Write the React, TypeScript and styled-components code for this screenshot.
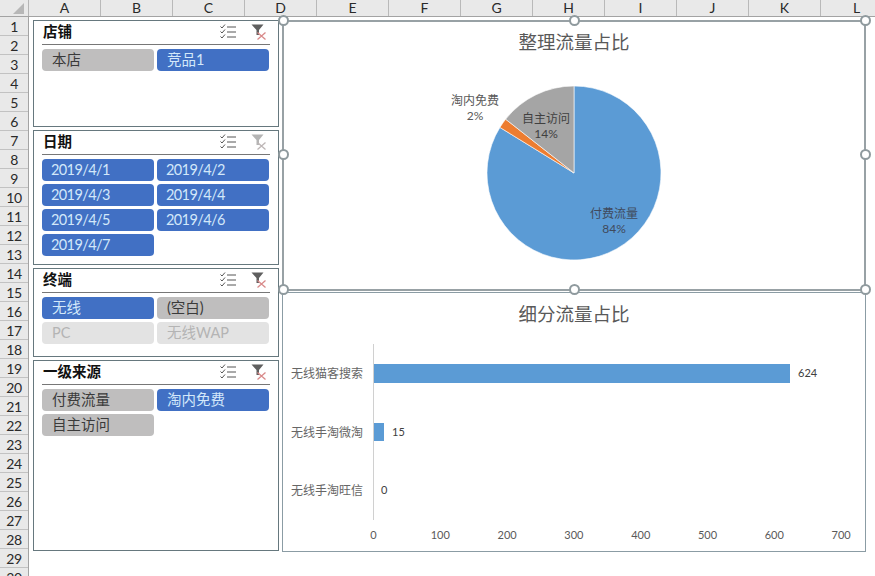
import React from "react";
import styled, { createGlobalStyle } from "styled-components";

const FONT = `Lato, "Noto Sans CJK SC", sans-serif`;

const GlobalStyle = createGlobalStyle`
  html, body { margin: 0; padding: 0; background: #fff; }
  body { font-family: ${FONT}; }
`;

const Sheet = styled.div`
  width: 875px;
  height: 576px;
  overflow: hidden;
  background: #fff;
  display: flex;
  flex-direction: column;
`;
const ColumnBar = styled.div`
  display: flex;
  flex: none;
  height: 17px;
  box-sizing: border-box;
  background: #e9e9e9;
  border-bottom: 1px solid #a3a3a3;
`;
const Corner = styled.div`
  flex: none;
  width: 29px;
  box-sizing: border-box;
  border-right: 1px solid #b5b5b5;
  display: flex;
  justify-content: flex-end;
  align-items: flex-end;
  padding: 0 4px 2px 0;
`;
const Triangle = styled.div`
  width: 0;
  height: 0;
  border-left: 11px solid transparent;
  border-bottom: 11px solid #b7b7b7;
`;
const ColumnCell = styled.div`
  flex: none;
  width: 72px;
  box-sizing: border-box;
  border-right: 1px solid #b9b9b9;
  font-size: 14px;
  line-height: 16px;
  text-align: center;
  color: #2a2a2a;
`;
const Body = styled.div`
  display: flex;
  flex: 1;
  min-height: 0;
`;
const RowBar = styled.div`
  flex: none;
  width: 29px;
  background: #e9e9e9;
  box-sizing: border-box;
  border-right: 1px solid #a3a3a3;
`;
const RowCell = styled.div`
  height: 19px;
  box-sizing: border-box;
  border-bottom: 1px solid #c2c2c2;
  font-size: 14px;
  line-height: 19px;
  letter-spacing: -0.4px;
  text-align: center;
  color: #2a2a2a;
`;
const Canvas = styled.div`
  display: flex;
  gap: 3px;
  padding: 3px 0 0 4px;
  align-items: flex-start;
`;
const SlicerColumn = styled.div`
  display: flex;
  flex-direction: column;
  gap: 3px;
  width: 246px;
`;
const Slicer = styled.section<{ $height: number }>`
  height: ${(p) => p.$height}px;
  box-sizing: border-box;
  border: 1px solid #66787e;
  background: #fff;
  padding: 0 8px;
`;
const SlicerHeader = styled.header`
  height: 24px;
  box-sizing: border-box;
  border-bottom: 1px solid #777;
  display: flex;
  align-items: center;
  padding: 0 3px 1px 1px;
  gap: 15px;
`;
const SlicerTitle = styled.h3`
  margin: 0 auto 0 0;
  padding-bottom: 3px;
  font-size: 14.5px;
  font-weight: 700;
  color: #111;
`;
const ChipGrid = styled.div`
  display: grid;
  grid-template-columns: 112px 112px;
  grid-auto-rows: 22px;
  gap: 3px;
  padding-top: 4px;
`;
const Chip = styled.div<{ $state: "on" | "off" | "empty"; $numeric: boolean }>`
  border-radius: 4px;
  padding-left: ${(p) => (p.$numeric ? 9 : 10)}px;
  font-size: 14.5px;
  line-height: 21px;
  letter-spacing: ${(p) => (p.$numeric ? "-0.6px" : "0")};
  white-space: nowrap;
  background: ${(p) => (p.$state === "on" ? "#4170c4" : p.$state === "off" ? "#bfbebe" : "#e3e3e3")};
  color: ${(p) => (p.$state === "on" ? "#d3e8fa" : p.$state === "off" ? "#3a3a3a" : "#b4b4b4")};
`;
const ChartColumn = styled.div`
  display: flex;
  flex-direction: column;
  gap: 1px;
  width: 584px;
`;
const SelectedChart = styled.section`
  position: relative;
  height: 271px;
  box-sizing: border-box;
  border: 2px solid #98a1a5;
  background: #fff;
`;
const PlainChart = styled.section`
  height: 260px;
  box-sizing: border-box;
  border: 1px solid #8b9ca4;
  background: #fff;
`;
const ChartTitle = styled.h2<{ $height: number; $pad: number }>`
  margin: 0;
  box-sizing: border-box;
  height: ${(p) => p.$height}px;
  padding-top: ${(p) => p.$pad}px;
  line-height: ${(p) => p.$height - p.$pad}px;
  font-size: 18.5px;
  font-weight: 400;
  text-align: center;
  color: #595959;
`;
const ChartSvg = styled.svg`
  display: block;
  font-family: ${FONT};
`;
const Handle = styled.span<{ $x: number; $y: number }>`
  position: absolute;
  left: ${(p) => p.$x}px;
  top: ${(p) => p.$y}px;
  width: 11px;
  height: 11px;
  box-sizing: border-box;
  margin: -5.5px 0 0 -5.5px;
  border: 2px solid #8f9a9e;
  border-radius: 50%;
  background: #fff;
`;

const MultiSelectIcon = () => (
  <svg width="16" height="16" viewBox="0 0 16 16" fill="none" stroke="#555" strokeWidth="1">
    <path d="M0.5 2.5l1.5 1.5 3-3.5M0.5 7.5l1.5 1.5 3-3.5M0.5 12.5l1.5 1.5 3-3.5" />
    <path d="M7 3h9M7 8h9M7 13h9" />
  </svg>
);

const ClearFilterIcon = ({ faded }: { faded?: boolean }) => (
  <svg width="16" height="16" viewBox="0 0 16 16" fill="none">
    <path d="M0.5 0.5h12L8 6v5H5.5V6z" fill={faded ? "#b4b4b4" : "#5f5f5f"} />
    <path
      d="M6.5 8.5l8 7M14.5 8.5l-8 7"
      stroke={faded ? "#bdb6b6" : "#d98a8a"}
      strokeWidth="1.3"
    />
  </svg>
);

type ChipData = { label: string; state: "on" | "off" | "empty" };
type SlicerData = { title: string; height: number; faded?: boolean; chips: ChipData[] };

const slicers: SlicerData[] = [
  {
    title: "店铺",
    height: 107,
    chips: [
      { label: "本店", state: "off" },
      { label: "竞品1", state: "on" },
    ],
  },
  {
    title: "日期",
    height: 135,
    faded: true,
    chips: ["1", "2", "3", "4", "5", "6", "7"].map((d) => ({ label: `2019/4/${d}`, state: "on" as const })),
  },
  {
    title: "终端",
    height: 89,
    chips: [
      { label: "无线", state: "on" },
      { label: "(空白)", state: "off" },
      { label: "PC", state: "empty" },
      { label: "无线WAP", state: "empty" },
    ],
  },
  {
    title: "一级来源",
    height: 191,
    chips: [
      { label: "付费流量", state: "off" },
      { label: "淘内免费", state: "on" },
      { label: "自主访问", state: "off" },
    ],
  },
];

const columns = "ABCDEFGHIJKL".split("");
const rows = Array.from({ length: 30 }, (_, i) => i + 1);
const handles: [number, number][] = [
  [-1, -2], [290, -2], [581, -2],
  [-1, 132], [581, 132],
  [-1, 267], [290, 267], [581, 267],
];

const polar = (deg: number, r = 87) => {
  const a = (deg * Math.PI) / 180;
  return `${(574 + r * Math.sin(a)).toFixed(2)} ${(173 - r * Math.cos(a)).toFixed(2)}`;
};
const slice = (from: number, to: number) =>
  `M574 173L${polar(from)}A87 87 0 ${to - from > 180 ? 1 : 0} 1 ${polar(to)}Z`;

const xAt = (v: number) => 373.5 + v * 0.668;

const PieLabel = ({ x, y, name, pct, fill = "#595959" }: { x: number; y: number; name: string; pct: string; fill?: string }) => (
  <text textAnchor="middle" fontSize="12" fill={fill}>
    <tspan x={x} y={y}>{name}</tspan>
    <tspan x={x} y={y + 15}>{pct}</tspan>
  </text>
);

export default function App() {
  return (
    <Sheet>
      <GlobalStyle />
      <ColumnBar>
        <Corner><Triangle /></Corner>
        {columns.map((c) => <ColumnCell key={c}>{c}</ColumnCell>)}
      </ColumnBar>
      <Body>
        <RowBar>
          {rows.map((r) => <RowCell key={r}>{r}</RowCell>)}
        </RowBar>
        <Canvas>
          <SlicerColumn>
            {slicers.map((s) => (
              <Slicer key={s.title} $height={s.height}>
                <SlicerHeader>
                  <SlicerTitle>{s.title}</SlicerTitle>
                  <MultiSelectIcon />
                  <ClearFilterIcon faded={s.faded} />
                </SlicerHeader>
                <ChipGrid>
                  {s.chips.map((c) => (
                    <Chip key={c.label} $state={c.state} $numeric={c.label.startsWith("2019")}>{c.label}</Chip>
                  ))}
                </ChipGrid>
              </Slicer>
            ))}
          </SlicerColumn>
          <ChartColumn>
            <SelectedChart>
              <ChartTitle $height={35} $pad={5}>整理流量占比</ChartTitle>
              <ChartSvg width="580" height="232" viewBox="284 57 580 232">
                <path d={slice(0, 301.6)} fill="#5b9bd5" stroke="#fff" strokeWidth="0.6" />
                <path d={slice(301.6, 308.2)} fill="#ed7d31" stroke="#fff" strokeWidth="0.6" />
                <path d={slice(308.2, 360)} fill="#a5a5a5" stroke="#fff" strokeWidth="0.6" />
                <PieLabel x={475} y={105} name="淘内免费" pct="2%" />
                <PieLabel x={546} y={123} name="自主访问" pct="14%" fill="#404040" />
                <PieLabel x={614} y={218} name="付费流量" pct="84%" fill="#404a5c" />
              </ChartSvg>
              {handles.map(([x, y]) => <Handle key={`${x}-${y}`} $x={x} $y={y} />)}
            </SelectedChart>
            <PlainChart>
              <ChartTitle $height={42} $pad={0}>细分流量占比</ChartTitle>
              <ChartSvg width="582" height="216" viewBox="283 335 582 216">
                <path d="M373.5 344V520" stroke="#d0d0d0" strokeWidth="1" />
                <rect x="374" y="364" width="416" height="19" fill="#5b9bd5" />
                <rect x="374" y="423" width="10" height="18" fill="#5b9bd5" />
                <g fontSize="12" fill="#666">
                  <text x="291" y="378">无线猫客搜索</text>
                  <text x="291" y="437">无线手淘微淘</text>
                  <text x="291" y="495">无线手淘旺信</text>
                </g>
                <g fontSize="11" fill="#404040">
                  <text x="798" y="377">624</text>
                  <text x="392" y="436">15</text>
                  <text x="381" y="494">0</text>
                </g>
                <g fontSize="11" fill="#595959" textAnchor="middle">
                  {[0, 100, 200, 300, 400, 500, 600, 700].map((v) => (
                    <text key={v} x={xAt(v)} y="539">{v}</text>
                  ))}
                </g>
              </ChartSvg>
            </PlainChart>
          </ChartColumn>
        </Canvas>
      </Body>
    </Sheet>
  );
}
